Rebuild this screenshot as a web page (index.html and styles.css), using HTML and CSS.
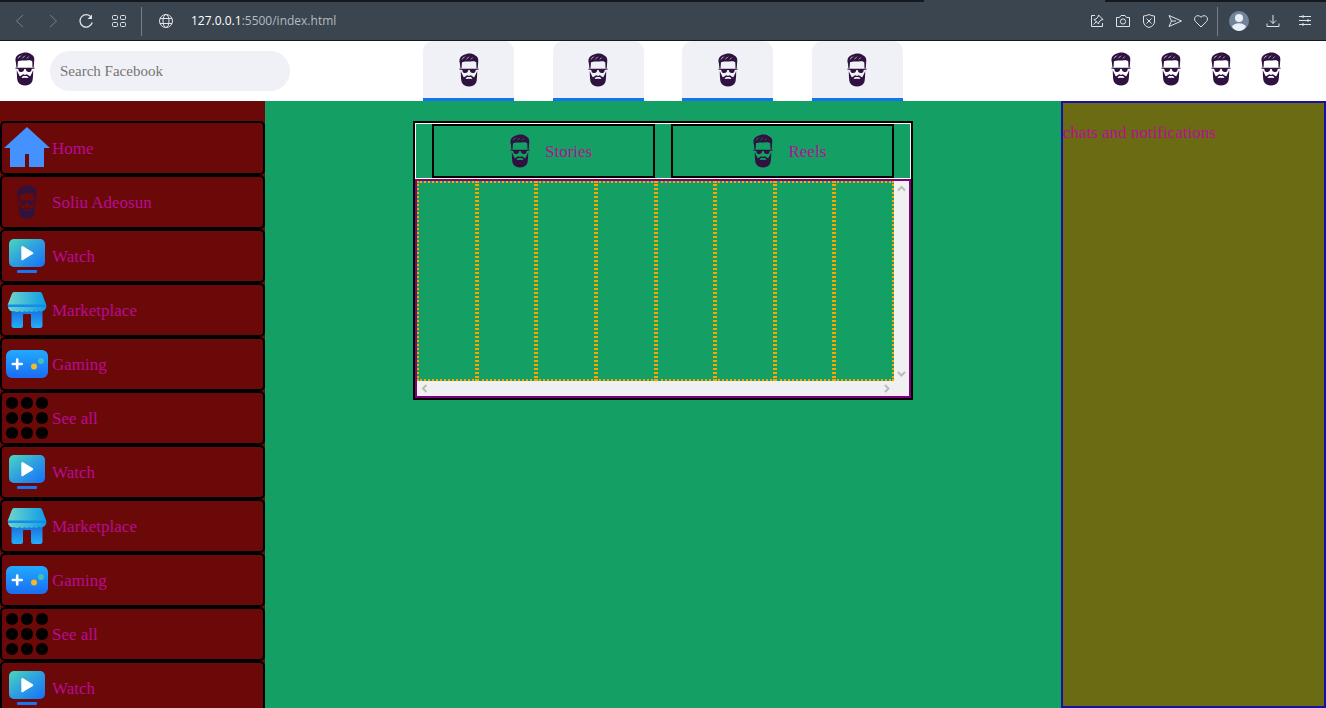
FILE: index.html
```html
<!DOCTYPE html>
<html lang="en">
<head>
<meta charset="utf-8">
<title>Facebook</title>
<link rel="stylesheet" href="styles.css">
</head>
<body>
<svg class="defs" aria-hidden="true">
  <defs>
    <linearGradient id="g-screen" x1="0" y1="0" x2="1" y2="1"><stop offset="0" stop-color="#48d8bd"/><stop offset=".5" stop-color="#2e9fe0"/><stop offset="1" stop-color="#1670fa"/></linearGradient>
    <linearGradient id="g-roof" x1="0" y1="0" x2="1" y2="0"><stop offset="0" stop-color="#6fd6c8"/><stop offset="1" stop-color="#0c9ce8"/></linearGradient>
    <linearGradient id="g-wall" x1="0" y1="0" x2="0" y2="1"><stop offset="0" stop-color="#1b66d8"/><stop offset="1" stop-color="#22aefc"/></linearGradient>
    <linearGradient id="g-pad" x1="0" y1="0" x2="0" y2="1"><stop offset="0" stop-color="#22aaff"/><stop offset="1" stop-color="#1a6cf2"/></linearGradient>
    <symbol id="face" viewBox="0 0 50 50">
      <path fill="#2f123f" fill-rule="evenodd" d="M16.400 23.500L15.900 18.500C15 15.500 15.300 13 17.500 11.200C19.500 9.300 22 9.400 23 8.700C26 8.200 29.500 8.700 31 10.200C34 11.500 34.700 14 34.200 17L33.700 23.500L32.500 23.500L32.300 17.500C31.300 16.300 30 16.100 28 16.300C24 16.800 20.500 15.800 18 17.300L17.500 23.500ZM17.300 15.200Q18.500 12 22 11.100Q19.500 12.800 17.300 15.200ZM21.500 15Q23 12.300 26 11.300Q24.300 12.900 21.500 15ZM26 15Q27.500 12.800 29.500 12Q28.500 13.600 26 15Z"/>
      <path fill="#2f123f" d="M15.300 23.800H34.700V24.600L31.700 24.900C31.600 27.300 30.300 28 28.700 28C27 28 26 27 25.700 25.100H24.300C24 27 23 28 21.300 28C19.700 28 18.400 27.300 18.300 24.900L15.300 24.600Z"/>
      <path fill="#2f123f" fill-rule="evenodd" d="M16.800 26L17.600 28L19.700 32.200C20.800 32.300 21.600 30.800 23.500 30.300L25 30.900L26.500 30.300C28.400 30.800 29.200 32.300 30.300 32.200L32.400 28L33.200 26C33.200 30 33 35 32.300 37.300C31 40.300 28 41.400 25 41.400C22 41.400 19 40.300 17.700 37.300C17 35 16.800 30 16.800 26ZM21.600 34.100Q25 33.200 28.400 34.100C28.200 32.500 27 31.900 25 32C23 31.900 21.800 32.500 21.600 34.100Z"/>
    </symbol>
    <symbol id="home" viewBox="0 0 50 50"><path fill="#4592ff" d="M25 4L48 25H42V44H27V31H23V44H8V25H2Z"/></symbol>
    <symbol id="watch" viewBox="0 0 50 50">
      <rect x="7" y="8" width="36" height="28" rx="5" fill="url(#g-screen)"/>
      <path fill="#fff" d="M19.300 16Q19.800 14.600 21 15.200L30.800 21.200Q31.800 22 30.800 22.900L21 29Q19.500 29.600 19.300 28.400Z"/>
      <rect x="15" y="39" width="20" height="3" rx="1" fill="#1b74f2"/>
    </symbol>
    <symbol id="market" viewBox="0 0 50 50">
      <path fill="url(#g-wall)" d="M9.500 22H40.500V40.500Q40.500 43 38 43H31Q29 43 29 41V30Q29 29 28 29H22Q21 29 21 30V41Q21 43 19 43H12Q9.500 43 9.500 40.500Z"/>
      <path fill="url(#g-roof)" d="M12 7H38Q39.500 7 40 8.500L44.200 19.500V22.500Q43.500 25 41 26Q39 27 37 25.500Q35 28 32 26Q29.500 28 27 26Q25 28 22.500 26Q20 28 17.500 26Q15 28 12.500 26Q8 27 6.300 23.500L5.800 19.500L10 8.500Q10.500 7 12 7Z"/>
      <path fill="#178be8" d="M5.800 19.500H44.200V22H6Z"/>
    </symbol>
    <symbol id="game" viewBox="0 0 50 50">
      <rect x="4" y="11" width="42" height="28" rx="6" fill="url(#g-pad)"/>
      <path fill="none" stroke="#fff" stroke-width="2.600" stroke-linecap="round" d="M10.800 25H19.700M15.200 20.500V29.500"/>
      <circle cx="39" cy="22" r="3" fill="#46bfb6"/><circle cx="32" cy="27.500" r="3" fill="#f7b928"/>
    </symbol>
    <symbol id="dots" viewBox="0 0 50 50">
      <g fill="#000"><circle cx="10" cy="10" r="6.100"/><circle cx="25" cy="10" r="6.100"/><circle cx="40" cy="10" r="6.100"/><circle cx="10" cy="25" r="6.100"/><circle cx="25" cy="25" r="6.100"/><circle cx="40" cy="25" r="6.100"/><circle cx="10" cy="40" r="6.100"/><circle cx="25" cy="40" r="6.100"/><circle cx="40" cy="40" r="6.100"/></g>
    </symbol>
  </defs>
</svg>

<div class="browser">
  <div class="strip"><span class="strip-left"></span><span class="strip-right"></span></div>
  <div class="tools">
    <div class="nav-tools">
      <button class="tool dim" aria-label="Back"><svg viewBox="0 0 16 16"><path d="M11 2L4.500 8L11 14"/></svg></button>
      <button class="tool dim" aria-label="Forward"><svg viewBox="0 0 16 16"><path d="M5 2L11.500 8L5 14"/></svg></button>
      <button class="tool" aria-label="Reload"><svg viewBox="0 0 16 16"><path d="M13.400 4.500A6.200 6.200 0 1 0 14.200 9.500" stroke-width="1.300"/><path d="M14 1.500V6H9.500Z" fill="currentColor" stroke="none"/></svg></button>
      <button class="tool" aria-label="Speed dial"><svg viewBox="0 0 16 16"><rect x="1.500" y="2.500" width="5" height="4" rx="1"/><rect x="9.500" y="2.500" width="5" height="4" rx="1"/><rect x="1.500" y="9.500" width="5" height="4" rx="1"/><rect x="9.500" y="9.500" width="5" height="4" rx="1"/></svg></button>
    </div>
    <span class="divider"></span>
    <div class="address">
      <button class="tool" aria-label="Site information"><svg viewBox="0 0 16 16"><circle cx="8" cy="8" r="6.500"/><ellipse cx="8" cy="8" rx="3" ry="6.500"/><path d="M2 5.500H14M2 10.500H14"/></svg></button>
      <span class="url"><b>127.0.0.1</b>:5500/index.html</span>
    </div>
    <div class="page-tools">
      <button class="tool" aria-label="Pin"><svg viewBox="0 0 16 16"><path d="M6 2.500H2.500V13.500H13.500V10M4.500 11.500L8 8M9.500 2L14 6.500L12 7L10 9L9.500 11L5 6.500L7 6L9 4Z"/></svg></button>
      <button class="tool" aria-label="Snapshot"><svg viewBox="0 0 16 16"><path d="M2 4.500H4.500L6 2.500H10L11.500 4.500H14.500V13.500H1.500V4.500Z"/><circle cx="8" cy="8.500" r="2.600"/></svg></button>
      <button class="tool" aria-label="Ad blocker"><svg viewBox="0 0 16 16"><path d="M8 1.500Q11 3 13.500 3V9Q13 13 8 14.500Q3 13 2.500 9V3Q5 3 8 1.500ZM5.500 5.500L10.500 10.500M10.500 5.500L5.500 10.500"/></svg></button>
      <button class="tool" aria-label="Send"><svg viewBox="0 0 16 16"><path d="M2 2.500L14.500 8L2 13.500L4.500 8ZM4.500 8H9"/></svg></button>
      <button class="tool" aria-label="Favourite"><svg viewBox="0 0 16 16"><path d="M8 14L2.500 8.500C-.5 5 4 .2 8 4.200C12 .2 16.500 5 13.500 8.500Z"/></svg></button>
    </div>
    <span class="divider"></span>
    <div class="user-tools">
      <button class="tool avatar" aria-label="Profile"><svg viewBox="0 0 20 20"><circle cx="10" cy="10" r="10" fill="#72849a" stroke="none"/><circle cx="10" cy="7" r="4" fill="#e9f0f8" stroke="none"/><path fill="#e9f0f8" stroke="none" d="M3 16Q5 12.300 10 12.300T17 16Q14 20 10 20T3 16Z"/></svg></button>
      <button class="tool" aria-label="Downloads"><svg viewBox="0 0 16 16"><path d="M8 2V10.500M5 7.500L8 10.500L11 7.500M2 10.500V13.500H14V10.500"/></svg></button>
      <button class="tool" aria-label="Easy setup"><svg viewBox="0 0 16 16"><path d="M2 3.500H14M2 7.500H14M2 11.500H14M6 2V5M11 6V9M6 10V13"/></svg></button>
    </div>
  </div>
</div>

<header class="header">
  <div class="brand">
    <svg class="icon"><use href="#face"/></svg>
    <input class="search" type="text" placeholder="Search Facebook" aria-label="Search Facebook">
  </div>
  <nav class="tabs">
    <a class="tab" href="#" aria-label="Home"><svg class="icon"><use href="#face"/></svg></a>
    <a class="tab" href="#" aria-label="Watch"><svg class="icon"><use href="#face"/></svg></a>
    <a class="tab" href="#" aria-label="Marketplace"><svg class="icon"><use href="#face"/></svg></a>
    <a class="tab" href="#" aria-label="Gaming"><svg class="icon"><use href="#face"/></svg></a>
  </nav>
  <div class="account">
    <svg class="icon"><use href="#face"/></svg><svg class="icon"><use href="#face"/></svg><svg class="icon"><use href="#face"/></svg><svg class="icon"><use href="#face"/></svg>
  </div>
</header>

<main class="main">
  <nav class="sidebar">
    <a class="item" href="#"><svg class="icon"><use href="#home"/></svg>Home</a>
    <a class="item" href="#"><svg class="icon"><use href="#face"/></svg>Soliu Adeosun</a>
    <a class="item" href="#"><svg class="icon"><use href="#watch"/></svg>Watch</a>
    <a class="item" href="#"><svg class="icon"><use href="#market"/></svg>Marketplace</a>
    <a class="item" href="#"><svg class="icon"><use href="#game"/></svg>Gaming</a>
    <a class="item" href="#"><svg class="icon"><use href="#dots"/></svg>See all</a>
    <a class="item" href="#"><svg class="icon"><use href="#watch"/></svg>Watch</a>
    <a class="item" href="#"><svg class="icon"><use href="#market"/></svg>Marketplace</a>
    <a class="item" href="#"><svg class="icon"><use href="#game"/></svg>Gaming</a>
    <a class="item" href="#"><svg class="icon"><use href="#dots"/></svg>See all</a>
    <a class="item" href="#"><svg class="icon"><use href="#watch"/></svg>Watch</a>
  </nav>
  <section class="feed">
    <div class="stories">
      <div class="story-tabs">
        <a class="story-tab" href="#"><svg class="icon"><use href="#face"/></svg>Stories</a>
        <a class="story-tab" href="#"><svg class="icon"><use href="#face"/></svg>Reels</a>
      </div>
      <div class="scroller">
        <div class="cards"><div class="card"></div><div class="card"></div><div class="card"></div><div class="card"></div><div class="card"></div><div class="card"></div><div class="card"></div><div class="card"></div></div>
        <div class="bar bar-y"><svg class="arrow" viewBox="0 0 15 15"><path d="M4 9.500L7.500 6L11 9.500"/></svg><svg class="arrow" viewBox="0 0 15 15"><path d="M4 6L7.500 9.500L11 6"/></svg></div>
        <div class="bar bar-x"><svg class="arrow" viewBox="0 0 15 15"><path d="M9.500 4L6 7.500L9.500 11"/></svg><svg class="arrow" viewBox="0 0 15 15"><path d="M6 4L9.500 7.500L6 11"/></svg></div>
        <div class="bar"></div>
      </div>
    </div>
  </section>
  <aside class="chats"><p class="chats-text">chats and notifications</p></aside>
</main>
</body>
</html>
```
FILE: styles.css
```css
* { box-sizing: border-box; }

body {
  margin: 0;
  height: 100vh;
  overflow: hidden;
  display: flex;
  flex-direction: column;
  background: #fff;
  color: #b80d94;
  font: 17px/23px "Liberation Serif", serif;
}

a { color: inherit; text-decoration: none; }
.defs { position: absolute; width: 0; height: 0; }
.icon { width: 50px; height: 50px; flex: none; display: block; }

/* Browser toolbar */
.browser {
  flex: none;
  height: 41px;
  display: flex;
  flex-direction: column;
  background: #3b4550;
  border-bottom: 1px solid #15181c;
}
.strip { height: 2px; display: flex; justify-content: space-between; }
.strip-left { width: 924px; background: #15181c; }
.strip-right { width: 221px; background: #15181c; }
.tools { flex: 1; display: flex; align-items: center; padding: 0 13px 0 12px; }
.tool {
  width: 16px;
  height: 16px;
  padding: 0;
  border: 0;
  background: none;
  color: #dfe3e7;
}
.tool svg {
  display: block;
  width: 100%;
  height: 100%;
  fill: none;
  stroke: currentColor;
  stroke-width: 1;
}
.dim { color: #75808b; }
.avatar { width: 20px; height: 20px; }
.nav-tools { display: flex; gap: 17px; }
.divider { width: 1px; height: 29px; background: #75808b; }
.nav-tools + .divider { margin: 0 16px 0 14px; }
.address { flex: 1; display: flex; align-items: center; gap: 17px; }
.url { font: 12px/18px "Open Sans", sans-serif; color: #b3bac1; }
.url b { font-weight: 400; color: #fff; }
.page-tools { display: flex; gap: 10px; margin-right: 8px; }
.user-tools { display: flex; align-items: center; gap: 16px; margin-left: 11px; }

/* Page header */
.header {
  flex: none;
  height: 60px;
  display: grid;
  grid-template-columns: 1fr 42% 1fr;
}
.brand { display: flex; align-items: center; }
.search {
  width: 240px;
  height: 40px;
  padding: 0 10px;
  border: 0;
  border-radius: 20px;
  background: #f0f1f6;
  font: 15px/20px "Liberation Serif", serif;
}
.search::placeholder { color: #757575; opacity: 1; }
.tabs { display: flex; justify-content: space-evenly; }
.tab {
  width: 91px;
  display: flex;
  align-items: center;
  justify-content: center;
  background: #f0f1f6;
  border-bottom: 3px solid #1773ea;
  border-radius: 10px 10px 0 0;
}
.account { display: flex; align-items: center; justify-content: flex-end; padding: 0 30px 4px 0; }
.brand .icon { margin-bottom: 4px; }

/* Three columns */
.main {
  flex: 1;
  min-height: 0;
  display: grid;
  grid-template-columns: 1fr 60% 1fr;
  background: #14a064;
}
.sidebar {
  min-height: 0;
  overflow: hidden;
  padding-top: 20px;
  background: #6b0808;
}
.item {
  display: flex;
  align-items: center;
  border: 2px solid #000;
  border-radius: 5px;
}
.feed { padding-top: 20px; }
.stories { width: 500px; margin: 0 auto; border: 2px solid #000; }
.story-tabs { display: flex; justify-content: space-evenly; border: 1px solid #fff; }
.story-tab {
  width: 45%;
  display: flex;
  align-items: center;
  justify-content: center;
  border: 2px solid #000;
}
.scroller {
  display: grid;
  grid-template-columns: 1fr 15px;
  grid-template-rows: 200px 15px;
  border: 2px solid #800080;
}
.cards { display: flex; }
.card { flex: 1; border: 2px dotted #ffa500; }
.bar { display: flex; justify-content: space-between; background: #f0f0f0; }
.bar-y { flex-direction: column; }
.arrow { width: 15px; height: 15px; fill: none; stroke: #bcbcbc; stroke-width: 2; }
.chats { border: 2px solid #1a0f9e; background: #6b6b13; }
.chats-text { margin: 18px 0; }
```
